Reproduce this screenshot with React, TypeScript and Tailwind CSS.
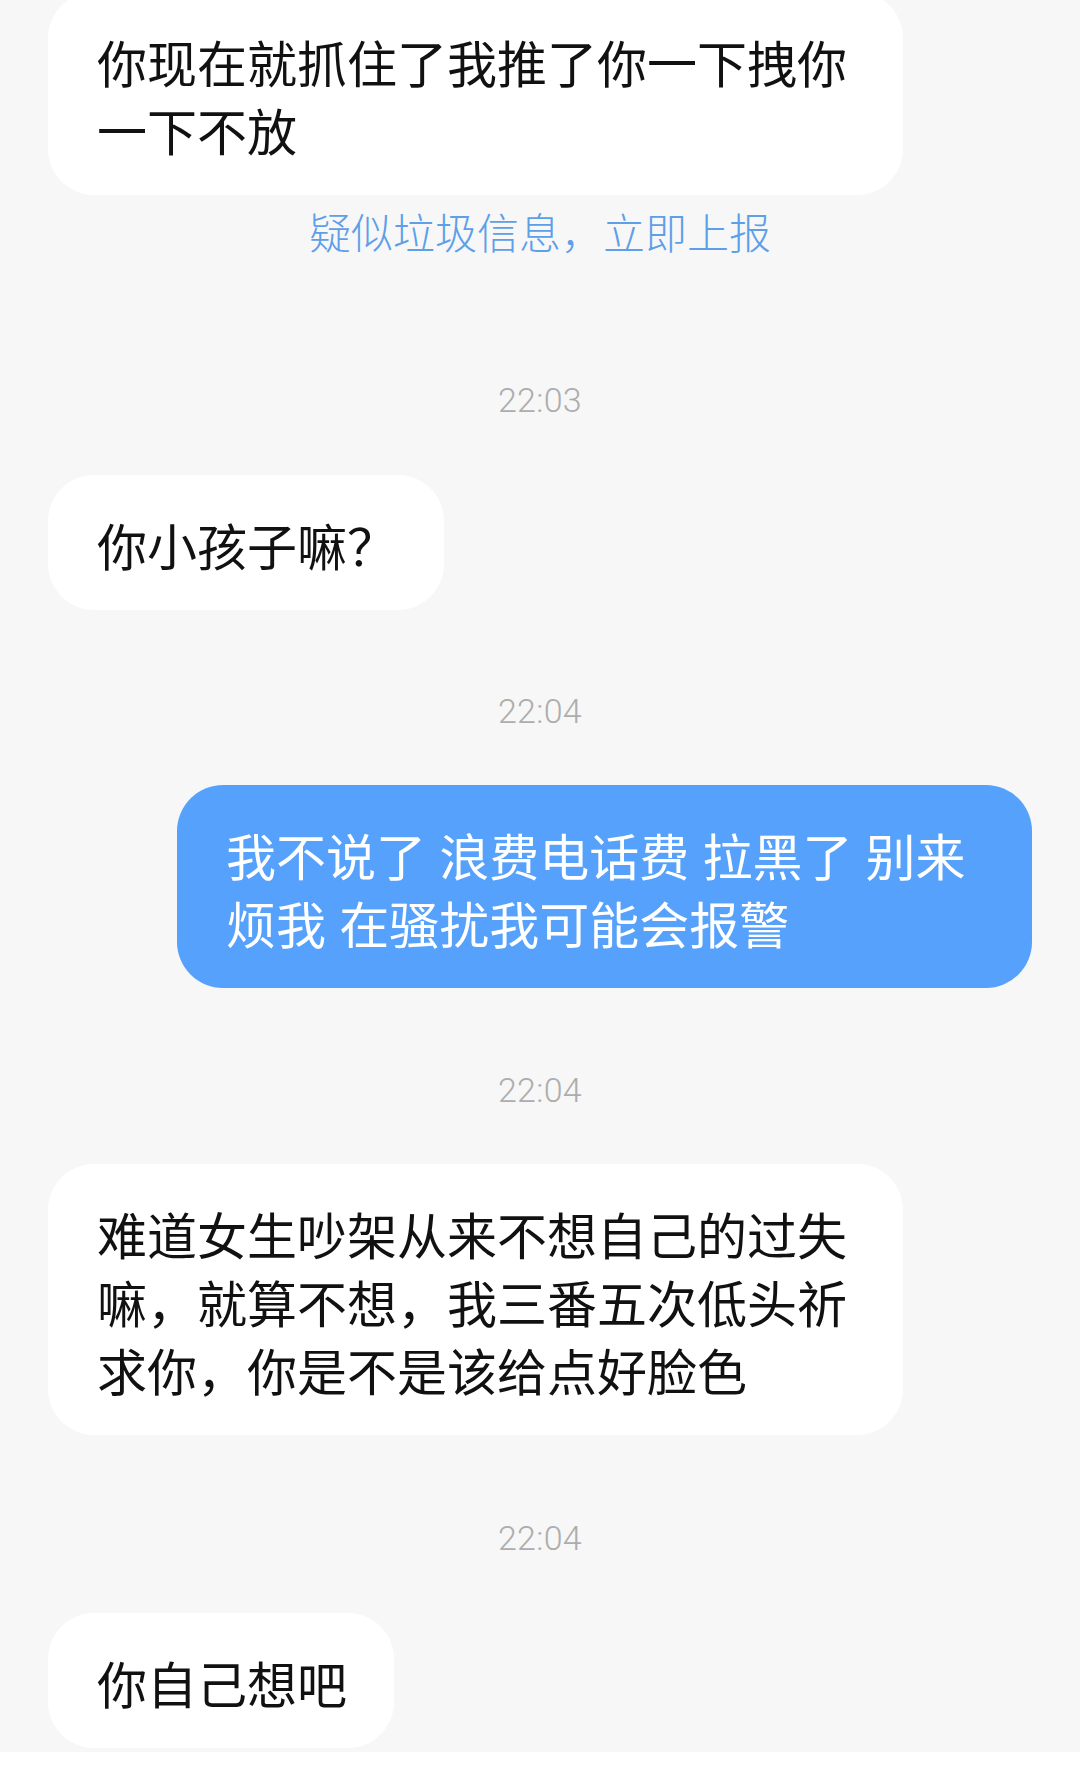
import React from 'react'

const cjk = { fontFamily: '"Noto Sans CJK SC", "Noto Sans", sans-serif' }

function Stamp({ time, className }: { time: string; className: string }) {
  return (
    <div
      className={`text-center text-[34px] leading-[40px] font-light tracking-[0.3px] text-[#adadad] ${className}`}
      style={{ fontFamily: 'Roboto, "Liberation Sans", sans-serif' }}
    >
      {time}
    </div>
  )
}

function Left({ text, className }: { text: string; className: string }) {
  return (
    <div className={`flex ${className}`}>
      <div
        className="max-w-[855px] rounded-[46px] bg-white pl-[49px] pr-[47px] pt-[35px] pb-[32px] text-[50px] leading-[68px] text-[#111111]"
        style={cjk}
      >
        {text}
      </div>
    </div>
  )
}

function Right({ text, className }: { text: string; className: string }) {
  return (
    <div className={`flex justify-end ${className}`}>
      <div
        className="max-w-[855px] rounded-[46px] bg-[#56a1fc] pl-[49px] pr-[46px] pt-[35px] pb-[32px] text-[50px] leading-[68px] [word-spacing:2px] text-white"
        style={cjk}
      >
        {text}
      </div>
    </div>
  )
}

export default function App() {
  return (
    <div className="w-[1080px] h-[1780px] overflow-hidden bg-white">
      <div className="h-[1752px] overflow-hidden bg-[#f7f7f7] px-[48px] flex flex-col">
        <Left className="-mt-[8px]" text="你现在就抓住了我推了你一下拽你一下不放" />
        <div className="mt-[11px] text-center text-[42px] leading-[50px] font-light text-[#5d9fe9]" style={cjk}>
          疑似垃圾信息，立即上报
        </div>

        <Stamp className="mt-[124px]" time="22:03" />
        <Left className="mt-[55px]" text="你小孩子嘛？" />

        <Stamp className="mt-[81px]" time="22:04" />
        <Right className="mt-[54px]" text="我不说了 浪费电话费 拉黑了 别来烦我 在骚扰我可能会报警" />

        <Stamp className="mt-[82px]" time="22:04" />
        <Left className="mt-[54px]" text="难道女生吵架从来不想自己的过失嘛，就算不想，我三番五次低头祈求你，你是不是该给点好脸色" />

        <Stamp className="mt-[83px]" time="22:04" />
        <Left className="mt-[55px]" text="你自己想吧" />
      </div>
    </div>
  )
}
